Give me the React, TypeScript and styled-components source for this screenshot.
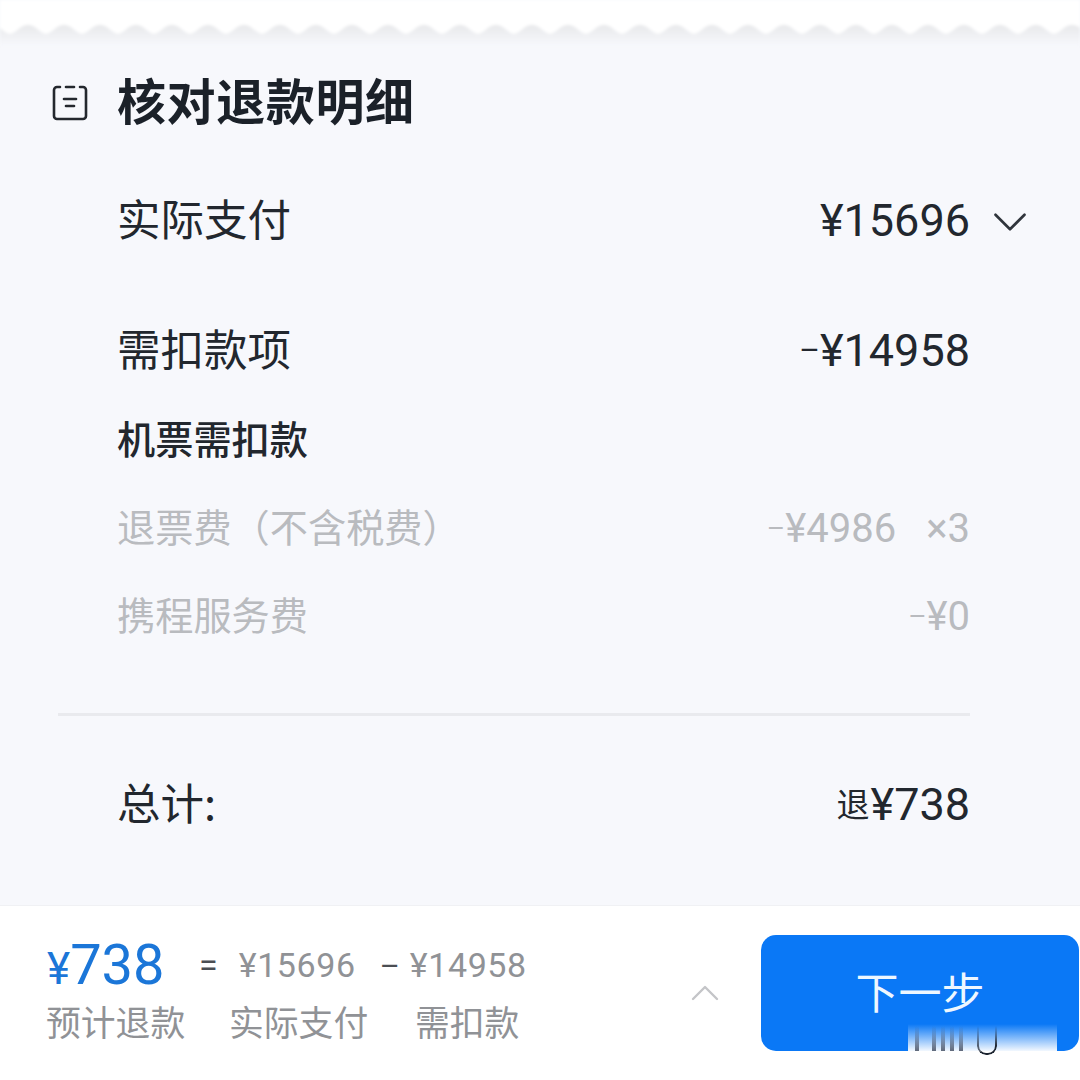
import React from 'react';
import styled, { createGlobalStyle } from 'styled-components';
import { ChevronDown, ChevronUp } from 'lucide-react';

const GlobalStyle = createGlobalStyle`
  html, body {
    margin: 0;
    padding: 0;
    background: #fff;
  }
  body {
    font-family: Roboto, "Noto Sans CJK SC", sans-serif;
  }
`;

const Page = styled.div`
  width: 1080px;
  height: 1080px;
  display: flex;
  flex-direction: column;
  overflow: hidden;
  background: #f7f8fc;
`;

const TornEdge = styled.svg`
  display: block;
  width: 1080px;
  height: 46px;
  flex-shrink: 0;
  filter: blur(1.5px);
`;

const Sheet = styled.main`
  flex: 1;
  display: flex;
  flex-direction: column;
  padding: 23px 110px 0 117px;
`;

const TitleRow = styled.div`
  position: relative;
  height: 60px;
  margin-bottom: 8px;
  display: flex;
  align-items: center;
`;

const TitleIcon = styled.svg`
  position: absolute;
  left: -66px;
  top: 14px;
  width: 38px;
  height: 38px;
`;

const Title = styled.h1`
  margin: 0;
  padding-bottom: 1px;
  font: 700 49px/60px "Noto Sans CJK SC", sans-serif;
  letter-spacing: 0.6px;
  color: #1b2129;
`;

const Row = styled.div<{ $height: number; $muted?: boolean }>`
  position: relative;
  height: ${p => p.$height}px;
  display: flex;
  align-items: center;
  justify-content: space-between;
  color: ${p => (p.$muted ? '#b9bbbf' : '#22272e')};
`;

// the CJK face sits lower than the digits, the bottom padding lines them up
const Label = styled.span<{ $size: number; $weight?: number }>`
  padding-bottom: 7px;
  font-family: "Noto Sans CJK SC", sans-serif;
  font-size: ${p => p.$size}px;
  font-weight: ${p => p.$weight ?? 400};
  white-space: nowrap;
`;

const Amount = styled.span<{ $size: number }>`
  display: flex;
  align-items: center;
  font-family: Roboto, sans-serif;
  font-size: ${p => p.$size}px;
  line-height: 1.2;
  white-space: nowrap;
`;

const Dash = styled.span<{ $scale?: number }>`
  font-size: ${p => p.$scale ?? 0.7}em;
`;

const RefundTag = styled.span`
  margin-right: 1px;
  padding-bottom: 2px;
  font-family: "Noto Sans CJK SC", sans-serif;
  font-size: 33px;
`;

const Times = styled.span`
  margin-left: 30px;
`;

const RowChevron = styled(ChevronDown)`
  position: absolute;
  right: -69px;
  top: 50%;
  transform: translateY(-50%);
  margin-top: 1px;
  color: #30353c;
`;

const Divider = styled.hr`
  margin: 52px 0 0 -59px;
  border: 0;
  height: 3px;
  background: #e9eaee;
`;

const Footer = styled.footer`
  position: relative;
  height: 175px;
  flex-shrink: 0;
  display: flex;
  align-items: flex-start;
  justify-content: space-between;
  box-sizing: border-box;
  padding: 29px 1px 0 47px;
  background: #fff;
  border-top: 1px solid #f0f1f4;
`;

const Summary = styled.div`
  display: flex;
  flex-direction: column;
  color: #909296;
`;

const FigureRow = styled.div`
  height: 60px;
  display: flex;
  align-items: center;
  white-space: nowrap;
`;

const RefundFigure = styled.span`
  width: 152px;
  font-size: 56px;
  color: #1b76d8;
`;

const YenSmall = styled.span`
  font-size: 44px;
`;

const Operator = styled.span`
  font-size: 34px;
  color: #4b4e53;
`;

const Figure = styled.span<{ $left: number; $right?: number }>`
  margin: 0 ${p => p.$right ?? 0}px 0 ${p => p.$left}px;
  font-size: 34px;
  letter-spacing: 0.6px;
  color: #909296;
`;

const CaptionRow = styled.div`
  display: grid;
  grid-template-columns: 183px 186px auto;
  margin-left: -1px;
`;

const Caption = styled.div`
  font-family: "Noto Sans CJK SC", sans-serif;
  font-size: 34.8px;
  line-height: 52px;
  white-space: nowrap;
`;

const Actions = styled.div`
  display: flex;
  align-items: center;
  gap: 32px;
`;

const UpChevron = styled(ChevronUp)`
  color: #c4c5c8;
`;

const NextButton = styled.button`
  position: relative;
  width: 318px;
  height: 116px;
  border: 0;
  padding: 0 0 6px;
  border-radius: 15px;
  background: #0a78f6;
  color: #eef7ff;
  font: 400 43px/1 "Noto Sans CJK SC", sans-serif;
`;

// photo artefact at the bottom edge of the button
const Smudge = styled.div`
  position: absolute;
  left: 147px;
  bottom: 0;
  width: 149px;
  height: 27px;
  background: linear-gradient(to bottom, rgba(255, 255, 255, 0), rgba(255, 255, 255, 0.95));
`;

const SmudgeBar = styled.i<{ $left: number }>`
  position: absolute;
  left: ${p => p.$left}px;
  top: 2px;
  bottom: 0;
  width: 4px;
  background: linear-gradient(to bottom, rgba(70, 80, 100, 0), rgba(70, 80, 100, 0.85));
`;

const SmudgeLoop = styled.i`
  position: absolute;
  left: 69px;
  top: 2px;
  bottom: -4px;
  width: 20px;
  box-sizing: border-box;
  border: 2px solid #1c2430;
  border-top: 0;
  border-radius: 0 0 9px 9px;
  border-left-color: rgba(28, 36, 48, 0.7);
  -webkit-mask-image: linear-gradient(to bottom, transparent, #000 70%);
  mask-image: linear-gradient(to bottom, transparent, #000 70%);
`;

const smudgeBars = [7, 24, 33, 42, 51];

// humps every 36px, round on top with a pointed dip between them
const edgePath =
  'M0 46 L0 34 ' +
  Array.from({ length: 31 }, (_, i) => {
    const x = i * 36 - 26;
    return `C${x + 8} 32 ${x + 10} 25 ${x + 18} 25 C${x + 26} 25 ${x + 28} 32 ${x + 36} 34`;
  }).join(' ') +
  ' L1080 46 Z';

const App: React.FC = () => (
  <Page>
    <GlobalStyle />
    <TornEdge viewBox="0 0 1080 46">
      <defs>
        <linearGradient id="edgeShade" x1="0" y1="24" x2="0" y2="46" gradientUnits="userSpaceOnUse">
          <stop offset="0" stopColor="#e7e8ea" />
          <stop offset="1" stopColor="#f7f8fc" />
        </linearGradient>
      </defs>
      <rect width="1080" height="46" fill="#fff" />
      <path fill="url(#edgeShade)" d={edgePath} />
    </TornEdge>
    <Sheet>
      <TitleRow>
        <TitleIcon viewBox="0 0 38 38" fill="none" stroke="#24282e" strokeWidth="2.6" strokeLinecap="round" strokeLinejoin="round">
          <path d="M9 4H6A3 3 0 0 0 3 7v26a3 3 0 0 0 3 3h26a3 3 0 0 0 3-3V7a3 3 0 0 0-3-3h-3" />
          <path d="M15 4h8" />
          <path d="M13 16h12" />
          <path d="M15 23h8" />
        </TitleIcon>
        <Title>核对退款明细</Title>
      </TitleRow>
      <Row $height={168}>
        <Label $size={43.5}>实际支付</Label>
        <Amount $size={45}>¥15696</Amount>
        <RowChevron size={58} strokeWidth={1.1} />
      </Row>
      <Row $height={92}>
        <Label $size={43.5}>需扣款项</Label>
        <Amount $size={45}><Dash>–</Dash>¥14958</Amount>
      </Row>
      <Row $height={88}>
        <Label $size={38.2} $weight={500}>机票需扣款</Label>
      </Row>
      <Row $height={88} $muted>
        <Label $size={38.2}>退票费（不含税费）</Label>
        <Amount $size={40}><Dash>–</Dash>¥4986<Times>×3</Times></Amount>
      </Row>
      <Row $height={88} $muted>
        <Label $size={38.2}>携程服务费</Label>
        <Amount $size={40}><Dash>–</Dash>¥0</Amount>
      </Row>
      <Divider />
      <Row $height={178}>
        <Label $size={43.5}>总计:</Label>
        <Amount $size={45}><RefundTag>退</RefundTag>¥738</Amount>
      </Row>
    </Sheet>
    <Footer>
      <Summary>
        <FigureRow>
          <RefundFigure><YenSmall>¥</YenSmall>738</RefundFigure>
          <Operator>=</Operator>
          <Figure $left={21} $right={24}>¥15696</Figure>
          <Operator><Dash $scale={0.9}>–</Dash></Operator>
          <Figure $left={10}>¥14958</Figure>
        </FigureRow>
        <CaptionRow>
          <Caption>预计退款</Caption>
          <Caption>实际支付</Caption>
          <Caption>需扣款</Caption>
        </CaptionRow>
      </Summary>
      <Actions>
        <UpChevron size={48} strokeWidth={1.2} />
        <NextButton>
          下一步
          <Smudge>
            {smudgeBars.map(left => <SmudgeBar key={left} $left={left} />)}
            <SmudgeLoop />
          </Smudge>
        </NextButton>
      </Actions>
    </Footer>
  </Page>
);

export default App;
